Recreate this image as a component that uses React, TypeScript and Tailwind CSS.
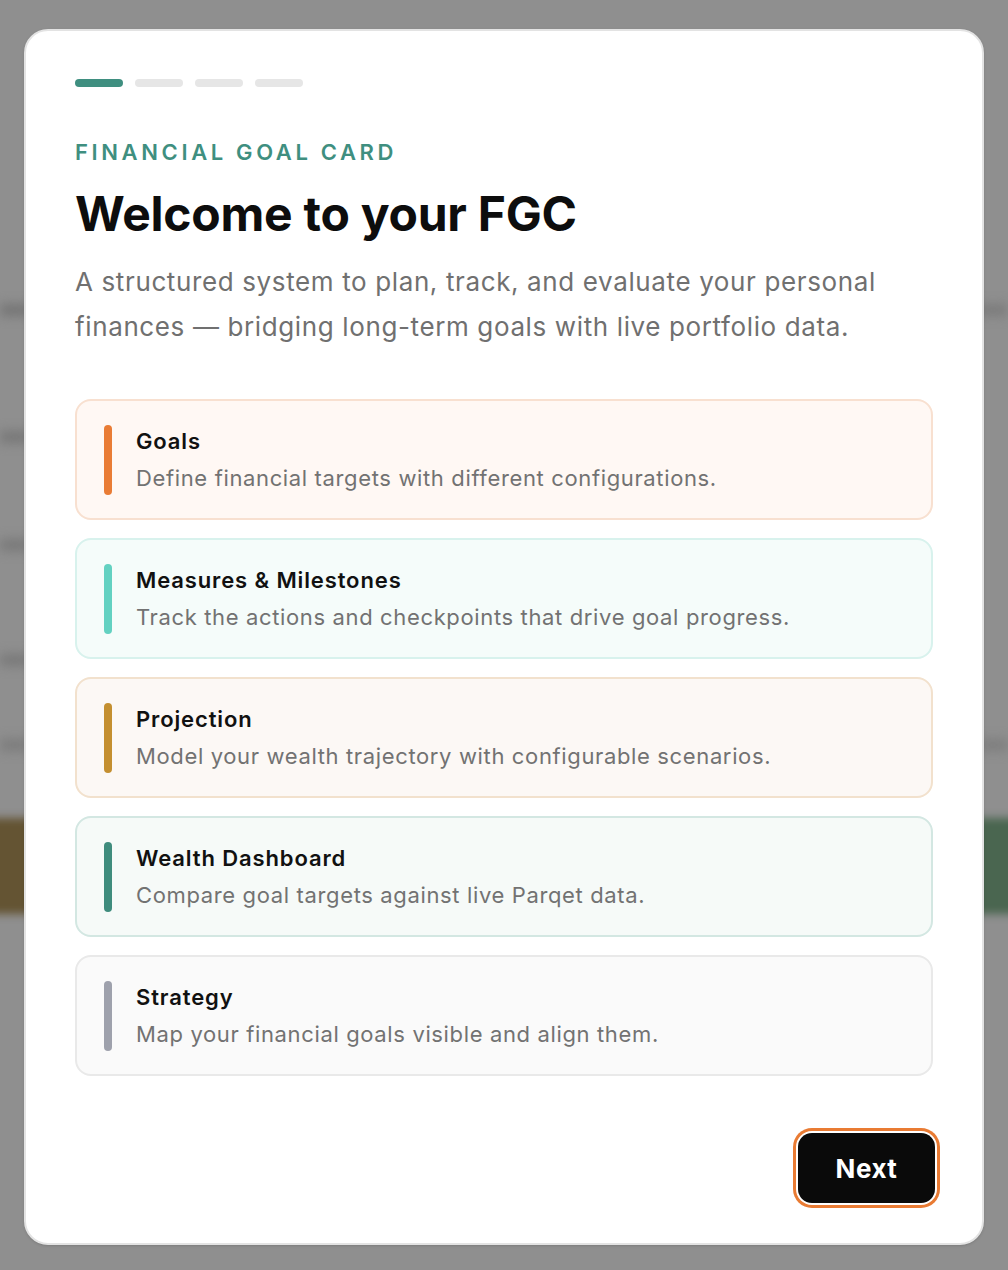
const features = [
  {
    title: "Goals",
    text: "Define financial targets with different configurations.",
    card: "bg-[#fff8f4] border-[#f8e0d0]",
    bar: "bg-[#e97c35]",
  },
  {
    title: "Measures & Milestones",
    text: "Track the actions and checkpoints that drive goal progress.",
    card: "bg-[#f5fcfa] border-[#d8f2ed]",
    bar: "bg-[#63d1c1]",
  },
  {
    title: "Projection",
    text: "Model your wealth trajectory with configurable scenarios.",
    card: "bg-[#fcf8f5] border-[#f2e1cd]",
    bar: "bg-[#c48f30]",
  },
  {
    title: "Wealth Dashboard",
    text: "Compare goal targets against live Parqet data.",
    card: "bg-[#f6faf8] border-[#d3e7e2]",
    bar: "bg-[#3f8c7d]",
  },
  {
    title: "Strategy",
    text: "Map your financial goals visible and align them.",
    card: "bg-[#fafafa] border-[#e9e9e9]",
    bar: "bg-[#9ea1ac]",
  },
];

function Backdrop() {
  // blurred page behind the overlay
  return (
    <div className="pointer-events-none absolute inset-0">
      <div className="absolute left-0 top-[305px] h-[10px] w-[30px] bg-[#6f6f6f] blur-[6px]" />
      <div className="absolute left-0 top-[432px] h-[10px] w-[30px] bg-[#727272] blur-[6px]" />
      <div className="absolute left-0 top-[540px] h-[10px] w-[30px] bg-[#747474] blur-[6px]" />
      <div className="absolute left-0 top-[655px] h-[10px] w-[30px] bg-[#747474] blur-[6px]" />
      <div className="absolute left-0 top-[740px] h-[10px] w-[30px] bg-[#787878] blur-[6px]" />
      <div className="absolute left-[-10px] top-[818px] h-[96px] w-[60px] bg-[#645433] blur-[4px]" />
      <div className="absolute right-0 top-[305px] h-[10px] w-[30px] bg-[#777777] blur-[6px]" />
      <div className="absolute right-0 top-[740px] h-[10px] w-[30px] bg-[#7a7a7a] blur-[6px]" />
      <div className="absolute right-[-10px] top-[818px] h-[96px] w-[60px] bg-[#4a6650] blur-[4px]" />
    </div>
  );
}

export default function App() {
  return (
    <div
      className="relative min-h-[1270px] w-full overflow-hidden bg-[#8f8f8f]"
      style={{ fontFamily: "Inter, 'Noto Sans', sans-serif" }}
    >
      <Backdrop />
      <div className="relative flex justify-center px-[24px] pt-[29px]">
        <div className="flex h-[1216px] w-[960px] flex-col rounded-[24px] border-2 border-[#e3e3e3] bg-white px-[49px] pb-[40px] pt-[48px] shadow-sm">
          <div className="flex gap-3">
            <span className="h-2 w-12 rounded-full bg-[#3f8f80]" />
            <span className="h-2 w-12 rounded-full bg-[#e6e6e6]" />
            <span className="h-2 w-12 rounded-full bg-[#e6e6e6]" />
            <span className="h-2 w-12 rounded-full bg-[#e6e6e6]" />
          </div>

          <p className="mt-[50px] text-[22px] font-semibold uppercase leading-[30px] tracking-[0.165em] text-[#3f8f80]">
            Financial Goal Card
          </p>
          <h1 className="mt-[19px] text-[48px] font-bold leading-[56px] tracking-[-0.005em] text-[#0d0d0d]">
            Welcome to your FGC
          </h1>
          <p className="mt-[17px] text-[26px] leading-[45px] tracking-[0.024em] text-[#707070]">
            A structured system to plan, track, and evaluate your personal
            finances — bridging long-term goals with live portfolio data.
          </p>

          <div className="mt-[50px] flex flex-col gap-[18px]">
            {features.map((f) => (
              <div
                key={f.title}
                className={`flex h-[121px] items-center gap-6 rounded-2xl border-2 px-[27px] ${f.card}`}
              >
                <span className={`h-[70px] w-2 shrink-0 rounded-full ${f.bar}`} />
                <div className="flex flex-col">
                  <span className="text-[22px] font-semibold leading-[37px] tracking-[0.04em] text-[#111111]">
                    {f.title}
                  </span>
                  <span className="text-[22px] leading-[37px] tracking-[0.029em] text-[#727272]">
                    {f.text}
                  </span>
                </div>
              </div>
            ))}
          </div>

          <div className="mt-auto flex justify-end">
            <button className="mr-[-2px] h-[70px] w-[137px] rounded-[14px] bg-[#0a0a0a] text-[26px] font-bold tracking-[0.02em] text-white ring-[3px] ring-[#e97b33] ring-offset-2">
              Next
            </button>
          </div>
        </div>
      </div>
    </div>
  );
}
